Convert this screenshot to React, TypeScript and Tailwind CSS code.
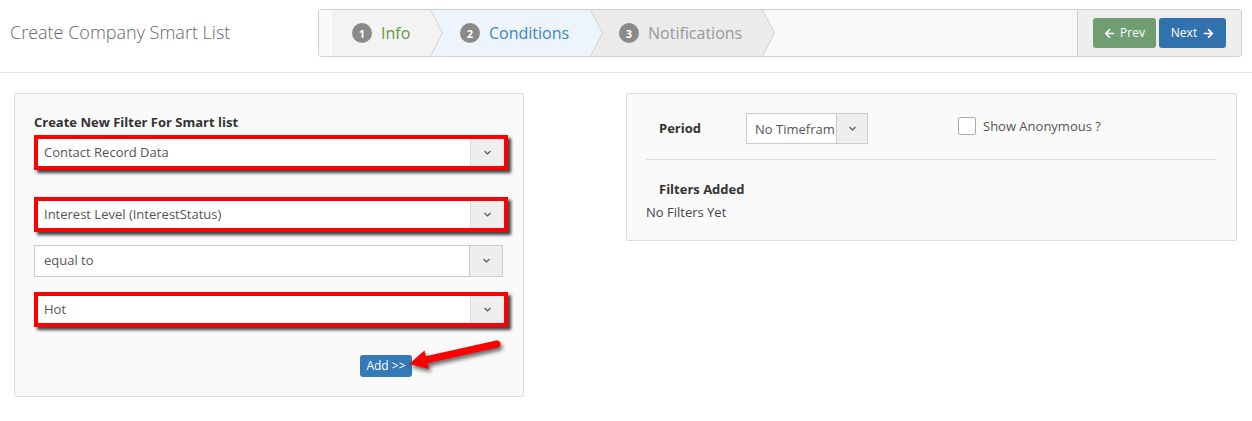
import { FaArrowLeft, FaArrowRight } from 'react-icons/fa';

function Caret() {
  return (
    <svg width="9" height="6" viewBox="0 0 9 6" fill="none">
      <polyline points="1.5,1 4.5,4 7.5,1" stroke="#555" strokeWidth="1.2" />
    </svg>
  );
}

function Chevron({ left, right }: { left: string; right: string }) {
  return (
    <svg width="13" height="46" viewBox="0 0 13 46" className="block shrink-0">
      <rect x="0" y="0" width="13" height="46" fill={right} />
      <polygon points="0,0 0.5,0 12.5,23 0.5,46 0,46" fill={left} />
      <polyline points="0.5,0 12.5,23 0.5,46" fill="none" stroke="#d0d0d0" strokeWidth="1" />
    </svg>
  );
}

function Step({ n, label, color, bg, pl }: { n: number; label: string; color: string; bg: string; pl: string }) {
  return (
    <div className={`flex h-[46px] items-center gap-[9px] ${pl}`} style={{ backgroundColor: bg }}>
      <span className="flex h-[20px] w-[20px] items-center justify-center rounded-full bg-[#8a8a8a] text-[11px] font-bold leading-none text-white">
        {n}
      </span>
      <span className="text-[16px] leading-none" style={{ color }}>
        {label}
      </span>
    </div>
  );
}

function FramedSelect({ value }: { value: string }) {
  return (
    <div className="w-[474px] border-4 border-[#ff0000] shadow-[3px_3px_3px_rgba(0,0,0,0.75)]">
      <div className="flex h-[27px] bg-white">
        <div className="flex flex-1 items-center pl-[6px] text-[13px] text-[#555]">{value}</div>
        <div className="flex w-[34px] items-center justify-center border-l border-[#ddd] bg-[#eee]">
          <Caret />
        </div>
      </div>
    </div>
  );
}

export default function App() {
  return (
    <div className="min-h-[421px] bg-white font-['Open_Sans',sans-serif] text-[13px] text-[#333]">
      {/* Header */}
      <div className="flex h-[73px] items-start border-b border-[#e5e5e5] pl-[10px] pr-[10px]">
        <h1 className="w-[308px] pt-[20px] text-[18px] font-light leading-[24px] text-[#666]">
          Create Company Smart List
        </h1>
        <div className="mt-[9px] flex h-[48px] flex-1 overflow-hidden rounded-[3px] border border-[#cfcfcf]">
          <div className="flex flex-1 bg-[#f8f8f8]">
            <div className="w-[13px] bg-[#fafafa]" />
            <div className="w-[98px]">
              <Step n={1} label="Info" color="#5f9a3c" bg="#f3f3f3" pl="pl-[20px]" />
            </div>
            <Chevron left="#f3f3f3" right="#eef4fb" />
            <div className="w-[147px]">
              <Step n={2} label="Conditions" color="#3a87c4" bg="#eef4fb" pl="pl-[17px]" />
            </div>
            <Chevron left="#eef4fb" right="#ebebeb" />
            <div className="w-[159px]">
              <Step n={3} label="Notifications" color="#999" bg="#ebebeb" pl="pl-[16px]" />
            </div>
            <Chevron left="#ebebeb" right="#f8f8f8" />
          </div>
          <div className="flex w-[164px] items-center gap-[3px] border-l border-[#d0d0d0] bg-[#eee] pl-[15px]">
            <button className="flex h-[30px] w-[63px] items-center justify-center gap-[5px] rounded-[3px] bg-[#709d71] text-[12px] text-white">
              <FaArrowLeft size={11} />
              Prev
            </button>
            <button className="flex h-[30px] w-[67px] items-center justify-center gap-[6px] rounded-[3px] bg-[#3172ae] text-[12px] text-white">
              Next
              <FaArrowRight size={11} />
            </button>
          </div>
        </div>
      </div>

      {/* Content */}
      <div className="flex items-start pl-[14px] pt-[20px]">
        <div className="relative w-[510px] rounded-[2px] border border-[#ddd] bg-[#fafafa] px-[19px] pb-[19px] pt-[19px]">
          <div className="text-[13px] font-bold leading-[18px] text-[#333]">Create New Filter For Smart list</div>
          <div className="mt-[4px]">
            <FramedSelect value="Contact Record Data" />
          </div>
          <div className="mt-[27px]">
            <FramedSelect value="Interest Level (InterestStatus)" />
          </div>
          <div className="mt-[13px] flex h-[32px] w-[469px] border border-[#ccc] bg-white">
            <div className="flex flex-1 items-center pl-[9px] text-[13px] text-[#555]">equal to</div>
            <div className="flex w-[33px] items-center justify-center border-l border-[#ccc] bg-[#eee]">
              <Caret />
            </div>
          </div>
          <div className="mt-[15px]">
            <FramedSelect value="Hot" />
          </div>
          <div className="mt-[28px] pl-[326px]">
            <button className="flex h-[22px] w-[52px] items-center justify-center rounded-[3px] bg-[#337ab7] text-[12px] text-white">
              Add &gt;&gt;
            </button>
          </div>
          <svg
            width="120"
            height="45"
            viewBox="0 0 120 45"
            className="absolute left-[386px] top-[242px] drop-shadow-[2px_3px_2px_rgba(0,0,0,0.6)]"
          >
            <line x1="22" y1="24.5" x2="96" y2="8" stroke="#ff0000" strokeWidth="7" strokeLinecap="round" />
            <polygon points="8,28 23.5,14.5 28,33" fill="#ff0000" />
          </svg>
        </div>

        <div className="ml-[102px] w-[611px] rounded-[2px] border border-[#ddd] bg-[#fafafa] px-[19px] pb-[19px] pt-[19px]">
          <div className="flex items-start">
            <div className="w-[100px] pl-[13px] pt-[6px] font-bold leading-[18px]">Period</div>
            <div className="flex h-[31px] w-[122px] border border-[#ccc] bg-white">
              <div className="flex flex-1 items-center overflow-hidden whitespace-nowrap pl-[8px] pt-[2px] text-[13px] text-[#555]">
                No Timefram
              </div>
              <div className="flex w-[31px] shrink-0 items-center justify-center border-l border-[#ccc] bg-[#eee]">
                <Caret />
              </div>
            </div>
            <div className="ml-[90px] mt-[4px] flex items-start gap-[7px]">
              <span className="block h-[18px] w-[18px] rounded-[2px] border border-[#aaa] bg-white" />
              <span className="leading-[18px] text-[#555]">Show Anonymous ?</span>
            </div>
          </div>
          <div className="mt-[15px] border-t border-[#ddd]" />
          <div className="mt-[20px] pl-[13px] font-bold leading-[18px]">Filters Added</div>
          <div className="mt-[5px] leading-[18px] text-[#444]">No Filters Yet</div>
        </div>
      </div>
    </div>
  );
}
